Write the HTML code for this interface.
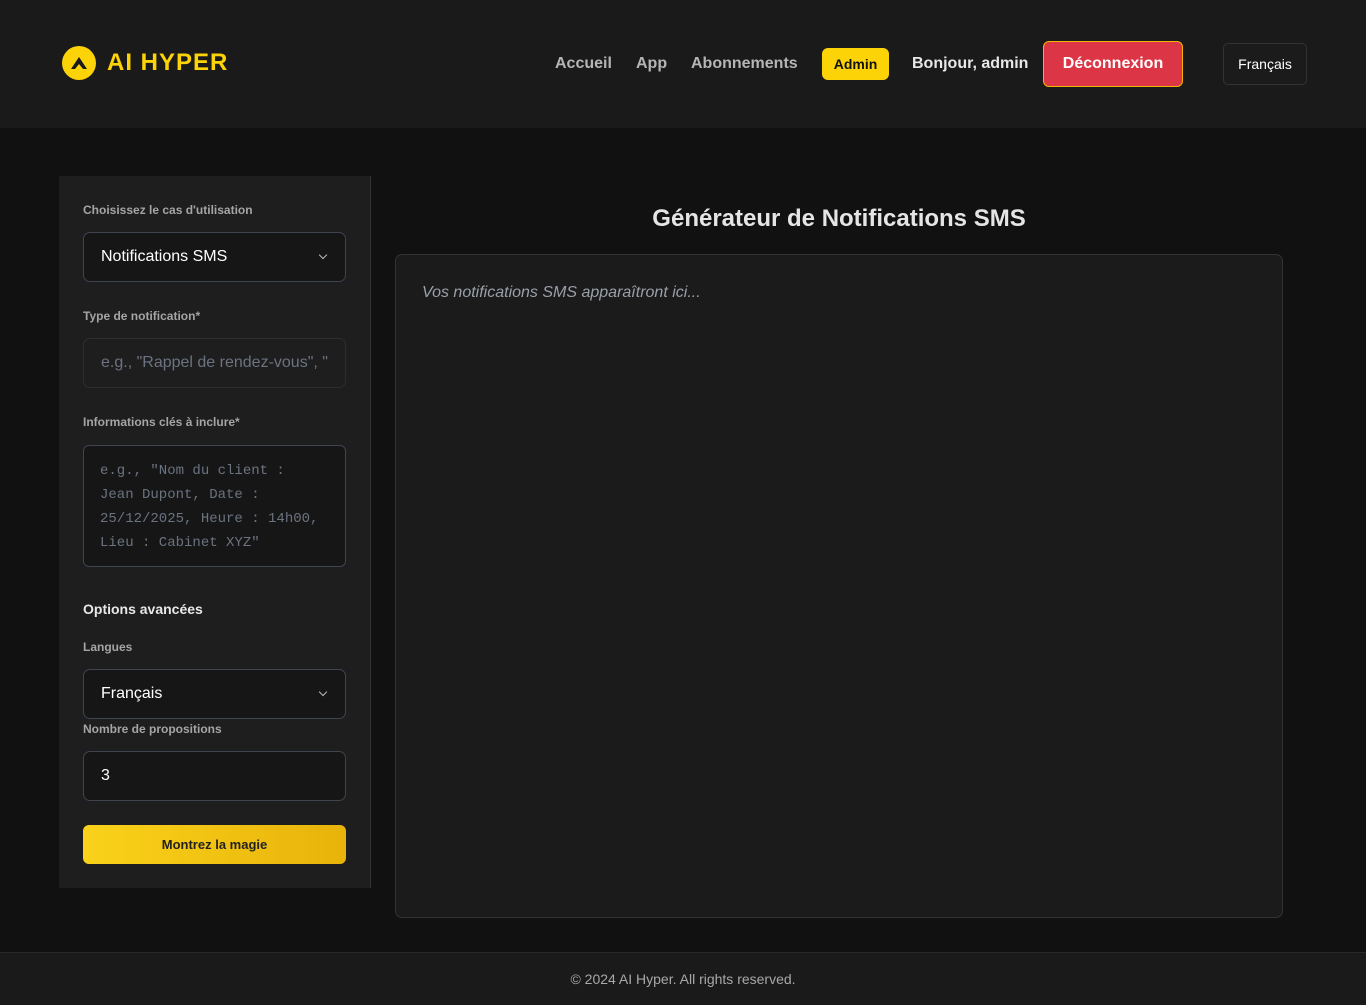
<!DOCTYPE html>
<html><head><meta charset="utf-8"><style>
*{box-sizing:border-box;margin:0;padding:0}
body{width:1366px;height:1005px;background:#111;font-family:"Liberation Sans",sans-serif;position:relative;overflow:hidden;color:#eee}
.hdr{position:absolute;left:0;top:0;width:1366px;height:128px;background:#1a1a1a}
.logo{position:absolute;left:62px;top:46px;width:34px;height:34px;border-radius:50%;background:#fcd307}
.brand{position:absolute;left:107px;top:49px;font-size:24px;font-weight:bold;color:#fcd307;letter-spacing:1px}
.nav{position:absolute;top:55px;font-size:16px;color:#b5b5b5;font-weight:bold}
.admin{position:absolute;left:822px;top:48px;width:67px;height:32px;background:#fcd307;border-radius:6px;color:#111;font-weight:bold;font-size:14px;text-align:center;line-height:32px}
.bj{position:absolute;left:912px;top:55px;font-size:16px;font-weight:bold;color:#e8e8e8}
.dec{position:absolute;left:1043px;top:41px;width:140px;height:46px;background:#dc3545;border:1px solid #f0b400;border-radius:6px;color:#fff;font-weight:bold;font-size:16px;text-align:center;line-height:44px}
.lang{position:absolute;left:1223px;top:43px;width:84px;height:42px;border:1px solid #333;border-radius:5px;background:#1b1b1b;color:#fff;font-size:14px;text-align:center;line-height:40px}
.side{position:absolute;left:59px;top:176px;width:312px;height:712px;background:#1e1e1e;border-right:1px solid #333}
.lbl{position:absolute;left:83px;font-size:12px;font-weight:bold;color:#a5a5a5}
.inp{position:absolute;left:83px;width:263px;height:50px;border:1px solid #3e4450;border-radius:7px;background:#161616;font-size:16px;color:#fff;padding-left:17px;line-height:48px}
.chev{position:absolute;right:19px;top:19px;width:6px;height:6px;border-right:1.5px solid #bbb;border-bottom:1.5px solid #bbb;transform:rotate(45deg)}
.ta{position:absolute;left:83px;top:445px;width:263px;height:122px;border:1px solid #3e4450;border-radius:6px;background:#161616;font-family:"Liberation Mono",monospace;font-size:14px;color:#6b7380;padding:13px 22px 13px 16px;line-height:24px;overflow:hidden}
.btn{position:absolute;left:83px;top:825px;width:263px;height:39px;border-radius:6px;background:linear-gradient(90deg,#fad21a,#e8b30a);color:#222;font-weight:bold;font-size:13px;text-align:center;line-height:39px}
h1{position:absolute;left:395px;width:888px;top:205px;text-align:center;font-size:24px;color:#e5e5e5}
.out{position:absolute;left:395px;top:254px;width:888px;height:664px;background:#1b1b1b;border:1px solid #333;border-radius:7px}
.out i{position:absolute;left:26px;top:29px;font-size:16px;color:#9aa0a8}
.ftr{position:absolute;left:0;top:952px;width:1366px;height:53px;background:#1a1a1a;border-top:1px solid #2a2a2a;text-align:center;font-size:14px;color:#a8a8a8;line-height:52px}
</style></head><body>
<div class="hdr">
<div class="logo"><svg width="34" height="34" viewBox="0 0 34 34"><path d="M9 23 L17 11 L25 23 L21 23 L17 18 L13 23 Z" fill="#1a1a1a"/></svg></div>
<div class="brand">AI HYPER</div>
<div class="nav" style="left:555px">Accueil</div>
<div class="nav" style="left:636px">App</div>
<div class="nav" style="left:691px">Abonnements</div>
<div class="admin">Admin</div>
<div class="bj">Bonjour, admin</div>
<div class="dec">Déconnexion</div>
<div class="lang">Français</div>
</div>
<div class="side"></div>
<div class="lbl" style="top:203px">Choisissez le cas d'utilisation</div>
<div class="inp" style="top:232px">Notifications SMS<div class="chev"></div></div>
<div class="lbl" style="top:309px">Type de notification*</div>
<div class="inp" style="top:338px;background:#1e1e1e;border-color:#2e2e2e;color:#6b7380;overflow:hidden;white-space:nowrap">e.g., "Rappel de rendez-vous", "</div>
<div class="lbl" style="top:415px">Informations clés à inclure*</div>
<div class="ta">e.g., "Nom du client :<br>Jean Dupont, Date :<br>25/12/2025, Heure : 14h00,<br>Lieu : Cabinet XYZ"</div>
<div class="lbl" style="top:601px;font-size:14px;color:#e8e8e8">Options avancées</div>
<div class="lbl" style="top:640px">Langues</div>
<div class="inp" style="top:669px">Français<div class="chev"></div></div>
<div class="lbl" style="top:722px">Nombre de propositions</div>
<div class="inp" style="top:751px">3</div>
<div class="btn">Montrez la magie</div>
<h1>Générateur de Notifications SMS</h1>
<div class="out"><i>Vos notifications SMS apparaîtront ici...</i></div>
<div class="ftr">© 2024 AI Hyper. All rights reserved.</div>
</body></html>
